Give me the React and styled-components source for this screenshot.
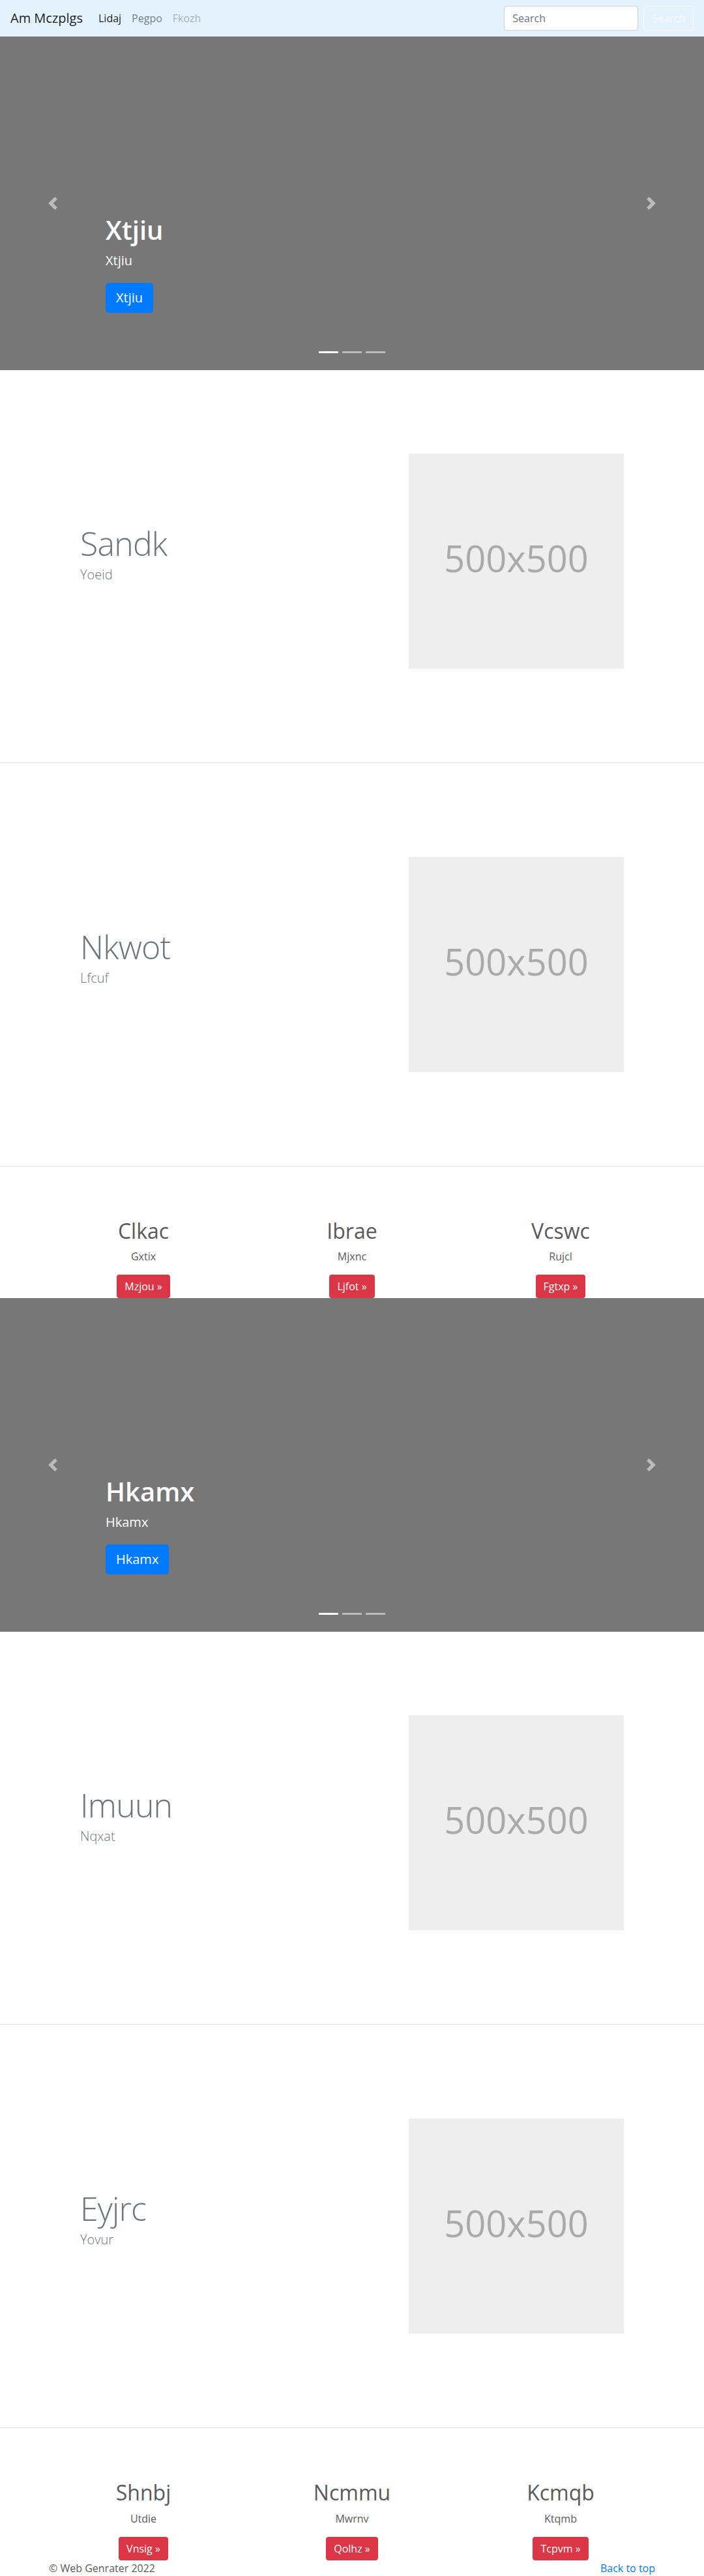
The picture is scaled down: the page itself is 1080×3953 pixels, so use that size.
import React from "react";
import styled, { createGlobalStyle } from "styled-components";

const GlobalStyle = createGlobalStyle`
  * {
    box-sizing: border-box;
  }
  body {
    margin: 0;
    font-family: "Open Sans", "Noto Sans", sans-serif;
    font-size: 16px;
    line-height: 1.5;
    color: #5a5a5a;
    background: #fff;
  }
`;

const Navbar = styled.nav`
  display: flex;
  align-items: center;
  height: 56px;
  padding: 8px 16px;
  background: #e3f2fd;
`;

const Brand = styled.a`
  font-size: 20px;
  line-height: 30px;
  color: rgba(0, 0, 0, 0.9);
  margin-right: 16px;
  text-decoration: none;
`;

const NavList = styled.ul`
  display: flex;
  flex: 1;
  list-style: none;
  margin: 0;
  padding: 0;
`;

const NavLink = styled.a`
  display: block;
  padding: 8px;
  text-decoration: none;
  color: ${({ $state }) =>
    $state === "active"
      ? "rgba(0, 0, 0, 0.9)"
      : $state === "disabled"
      ? "rgba(0, 0, 0, 0.3)"
      : "rgba(0, 0, 0, 0.5)"};
`;

const SearchForm = styled.form`
  display: flex;
  align-items: center;
  gap: 8px;
`;

const SearchInput = styled.input`
  width: 206px;
  height: 38px;
  padding: 6px 12px;
  font: inherit;
  color: #495057;
  background: #fff;
  border: 1px solid #ced4da;
  border-radius: 4px;

  &::placeholder {
    color: #6c757d;
  }
`;

const SearchButton = styled.button`
  height: 38px;
  padding: 6px 12px;
  font: inherit;
  color: #f8f9fa;
  background: transparent;
  border: 1px solid #f8f9fa;
  border-radius: 4px;
`;

const Carousel = styled.section`
  position: relative;
  height: 512px;
  margin-bottom: 64px;
  background: #777;
  color: #fff;
  display: flex;
  flex-direction: column;
  justify-content: flex-end;
  padding: 0 15% 88px;
`;

const CaptionTitle = styled.h1`
  margin: 0 0 8px;
  font-size: 40px;
  font-weight: 600;
  line-height: 1.2;
`;

const CaptionText = styled.p`
  margin: 0 0 19px;
  font-size: 20px;
  line-height: 30px;
`;

const PrimaryButton = styled.a`
  align-self: flex-start;
  display: inline-block;
  padding: 8px 16px;
  font-size: 20px;
  line-height: 30px;
  color: #fff;
  background: #007bff;
  border-radius: 5px;
  text-decoration: none;
`;

const Control = styled.span`
  position: absolute;
  top: 0;
  bottom: 0;
  ${({ $side }) => ($side === "prev" ? "left: 0;" : "right: 0;")}
  width: 15%;
  display: flex;
  align-items: center;
  justify-content: center;
  opacity: 0.5;
`;

const Indicators = styled.ol`
  position: absolute;
  left: 0;
  right: 0;
  bottom: 26px;
  display: flex;
  justify-content: center;
  gap: 6px;
  list-style: none;
  margin: 0;
  padding: 0;
`;

const Indicator = styled.li`
  width: 30px;
  height: 3px;
  background: #fff;
  opacity: ${({ $active }) => ($active ? 1 : 0.5)};
`;

const Featurette = styled.div`
  width: 80%;
  margin: 0 auto;
  padding: 64px 0;
  display: flex;
  align-items: center;
`;

const FeatureText = styled.div`
  flex: 0 0 58.3333%;
  padding: 0 15px;
`;

const FeatureMedia = styled.div`
  flex: 0 0 41.6667%;
  padding: 0 15px;
`;

const FeatureHeading = styled.h2`
  margin: 0 0 8px;
  font-size: 50px;
  font-weight: 300;
  line-height: 1;
  letter-spacing: -0.8px;
  color: #6c757d;
`;

const Lead = styled.p`
  margin: 0 0 16px;
  font-size: 20px;
  font-weight: 300;
  line-height: 30px;
  color: #6c757d;
`;

const PlaceholderSvg = styled.svg`
  display: block;
  width: 100%;
  height: auto;
  aspect-ratio: 1 / 1;
`;

const Divider = styled.hr`
  margin: 80px 0;
  border: 0;
  border-top: 1px solid rgba(0, 0, 0, 0.1);
`;

const Marketing = styled.div`
  width: 960px;
  margin: 0 auto;
  display: grid;
  grid-template-columns: repeat(3, 1fr);
  text-align: center;
`;

const Column = styled.div`
  padding: 0 15px;
`;

const ColumnTitle = styled.h2`
  margin: 0 0 8px;
  font-size: 32px;
  font-weight: 500;
  line-height: 1.2;
`;

const ColumnText = styled.p`
  margin: 0 12px 16px;
`;

const DangerButton = styled.a`
  display: inline-block;
  padding: 6px 12px;
  font-size: 16px;
  line-height: 24px;
  color: #fff;
  background: #dc3545;
  border-radius: 4px;
  text-decoration: none;
`;

const Footer = styled.footer`
  width: 960px;
  margin: 0 auto;
  padding: 0 15px;
  display: flex;
  justify-content: space-between;

  p {
    margin: 0 0 16px;
  }
  a {
    color: #007bff;
    text-decoration: none;
  }
`;

const Chevron = ({ dir }) => (
  <svg width="20" height="20" viewBox="0 0 8 8" fill="#fff">
    {dir === "prev" ? (
      <path d="M5.25 0l-4 4 4 4 1.5-1.5L4.25 4l2.5-2.5L5.25 0z" />
    ) : (
      <path d="M2.75 0l-1.5 1.5L3.75 4l-2.5 2.5L2.75 8l4-4-4-4z" />
    )}
  </svg>
);

const Slide = ({ title }) => (
  <Carousel>
    <CaptionTitle>{title}</CaptionTitle>
    <CaptionText>{title}</CaptionText>
    <PrimaryButton href="#">{title}</PrimaryButton>
    <Control $side="prev">
      <Chevron dir="prev" />
    </Control>
    <Control $side="next">
      <Chevron dir="next" />
    </Control>
    <Indicators>
      <Indicator $active />
      <Indicator />
      <Indicator />
    </Indicators>
  </Carousel>
);

const Feature = ({ heading, lead }) => (
  <Featurette>
    <FeatureText>
      <FeatureHeading>{heading}</FeatureHeading>
      <Lead>{lead}</Lead>
    </FeatureText>
    <FeatureMedia>
      <PlaceholderSvg xmlns="http://www.w3.org/2000/svg" role="img">
        <rect width="100%" height="100%" fill="#eee" />
        <text
          x="50%"
          y="50%"
          dy=".3em"
          fill="#aaa"
          textAnchor="middle"
          fontSize="56"
          fontFamily="'Open Sans', 'Noto Sans', sans-serif"
        >
          500x500
        </text>
      </PlaceholderSvg>
    </FeatureMedia>
  </Featurette>
);

const Columns = ({ items }) => (
  <Marketing>
    {items.map((item) => (
      <Column key={item.title}>
        <ColumnTitle>{item.title}</ColumnTitle>
        <ColumnText>{item.text}</ColumnText>
        <DangerButton href="#">{item.button} &raquo;</DangerButton>
      </Column>
    ))}
  </Marketing>
);

const App = () => (
  <>
    <GlobalStyle />
    <Navbar>
      <Brand href="#">Am Mczplgs</Brand>
      <NavList>
        <li>
          <NavLink href="#" $state="active">Lidaj</NavLink>
        </li>
        <li>
          <NavLink href="#">Pegpo</NavLink>
        </li>
        <li>
          <NavLink href="#" $state="disabled">Fkozh</NavLink>
        </li>
      </NavList>
      <SearchForm onSubmit={(e) => e.preventDefault()}>
        <SearchInput type="search" placeholder="Search" />
        <SearchButton type="submit">Search</SearchButton>
      </SearchForm>
    </Navbar>

    <Slide title="Xtjiu" />
    <Feature heading="Sandk" lead="Yoeid" />
    <Divider />
    <Feature heading="Nkwot" lead="Lfcuf" />
    <Divider />
    <Columns
      items={[
        { title: "Clkac", text: "Gxtix", button: "Mzjou" },
        { title: "Ibrae", text: "Mjxnc", button: "Ljfot" },
        { title: "Vcswc", text: "Rujcl", button: "Fgtxp" },
      ]}
    />

    <Slide title="Hkamx" />
    <Feature heading="Imuun" lead="Nqxat" />
    <Divider />
    <Feature heading="Eyjrc" lead="Yovur" />
    <Divider />
    <Columns
      items={[
        { title: "Shnbj", text: "Utdie", button: "Vnsig" },
        { title: "Ncmmu", text: "Mwrnv", button: "Qolhz" },
        { title: "Kcmqb", text: "Ktqmb", button: "Tcpvm" },
      ]}
    />

    <Footer>
      <p>&copy; Web Genrater 2022</p>
      <p>
        <a href="#">Back to top</a>
      </p>
    </Footer>
  </>
);

export default App;
